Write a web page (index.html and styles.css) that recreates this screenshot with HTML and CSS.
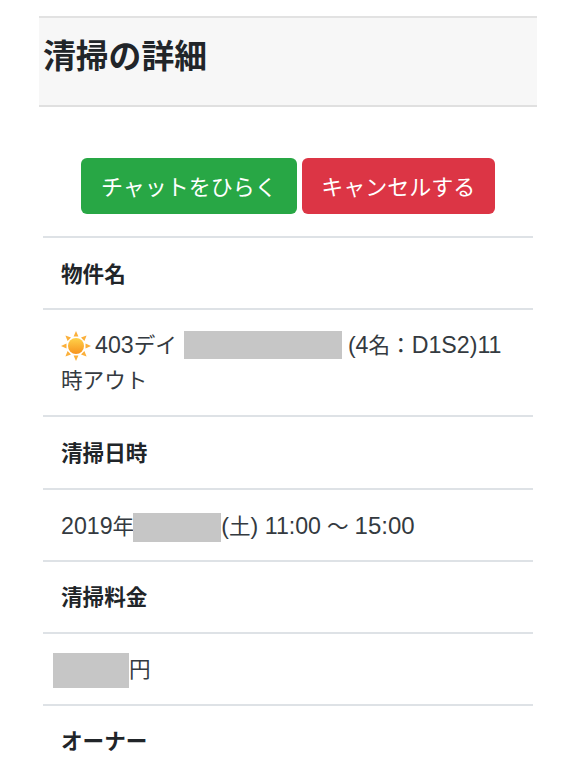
FILE: index.html
```html
<!DOCTYPE html>
<html lang="ja">
<head>
<meta charset="utf-8">
<title>清掃の詳細</title>
<link rel="stylesheet" href="styles.css">
</head>
<body>
<main class="page">
  <header class="head"><h1>清掃の詳細</h1></header>
  <div class="actions">
    <button class="btn green">チャットをひらく</button>
    <button class="btn red">キャンセルする</button>
  </div>
  <div class="table">
    <div class="row label">物件名</div>
    <div class="row value property">
      <svg class="sun" viewBox="0 0 30 30" aria-hidden="true">
        <defs><linearGradient id="s" x1="0" y1="0" x2="0" y2="1"><stop offset="0" stop-color="#ffd24a"/><stop offset="1" stop-color="#f7931e"/></linearGradient></defs>
        <g fill="#fbb03b">
          <path d="M15 0l2.4 5.5h-4.8z"/><path d="M15 30l2.4-5.5h-4.8z"/><path d="M0 15l5.5-2.4v4.8z"/><path d="M30 15l-5.5-2.4v4.8z"/>
          <path d="M4.4 4.4l5.6 2.2-3.4 3.4z"/><path d="M25.6 4.4l-5.6 2.2 3.4 3.4z"/><path d="M4.4 25.6l5.6-2.2-3.4-3.4z"/><path d="M25.6 25.6l-5.6-2.2 3.4-3.4z"/>
        </g>
        <circle cx="15" cy="15" r="8" fill="url(#s)"/>
      </svg><span class="lat">403</span>デイ<span class="mask m1"></span><span class="lat">(4</span>名：<span class="lat">D1S2)11</span><br>時アウト
    </div>
    <div class="row label tall">清掃日時</div>
    <div class="row value"><span class="lat">2019</span>年<span class="mask m2"></span><span class="lat">(</span>土<span class="lat">) 11:00</span> ～ <span class="lat time">15:00</span></div>
    <div class="row label value">清掃料金</div>
    <div class="row value"><span class="mask m3"></span>円</div>
    <div class="row label value">オーナー</div>
  </div>
</main>
</body>
</html>
```

FILE: styles.css
```css
html, body { margin: 0; padding: 0; background: #fff; }
body {
  font-family: "Liberation Sans", "Noto Sans CJK JP", sans-serif;
  font-size: 21.6px;
  color: #343a40;
  height: 768px;
  overflow: hidden;
}
.page { padding-top: 16px; }
.head {
  margin: 0 39px;
  height: 91px;
  box-sizing: border-box;
  padding: 21px 0 0 4px;
  background: #f7f7f7;
  border-top: 2px solid #e2e2e2;
  border-bottom: 2px solid #e0e0e0;
}
.head h1 {
  margin: 0;
  font-size: 32.8px;
  line-height: 36px;
  font-weight: 700;
  color: #212529;
}
.actions {
  display: flex;
  gap: 5px;
  margin: 51px 0 0 81px;
}
.btn {
  height: 56px;
  padding: 0 20px 2px;
  border: 0;
  border-radius: 6px;
  color: #fff;
  font: inherit;
  font-size: 22px;
}
.red { padding: 0 19.5px 2px; }
.green { background: #28a745; }
.red { background: #dc3545; }
.table { margin: 22px 43px 0; }
.row {
  box-sizing: border-box;
  border-top: 2px solid #dee2e6;
  padding: 19px 18px 16px;
  line-height: 35px;
  height: 72px;
}
.value { padding-top: 18px; }
.tall { height: 73px; }
.lat { font-size: 23.2px; }
.time { font-size: 24px; }
.label { font-weight: 700; color: #212529; }
.property { height: 107px; }
.sun { width: 30px; height: 30px; vertical-align: -8px; margin-right: 4px; }
.mask { display: inline-block; background: #c6c6c6; }
.m1 { width: 158px; height: 28px; margin: 0 6px 0 7px; vertical-align: -6px; }
.m2 { width: 88px; height: 29px; vertical-align: -8px; margin-left: -1px; }
.m3 { width: 76px; height: 35px; vertical-align: -11px; margin-left: -8px; }
```
